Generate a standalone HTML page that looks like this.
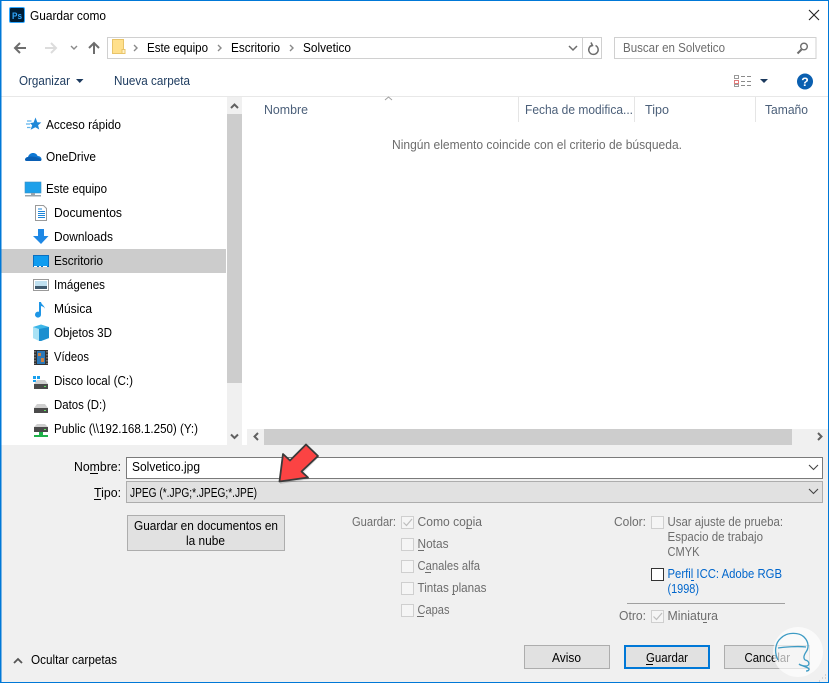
<!DOCTYPE html>
<html lang="es"><head><meta charset="utf-8"><title>Guardar como</title>
<style>
html,body{margin:0;padding:0;background:#fff;width:829px;height:683px;overflow:hidden}
svg{display:block}
text{font-family:"Liberation Sans",sans-serif;font-size:12.5px;fill:#000}
.g{fill:#6d6d6d}.h{fill:#4c607a}.n{fill:#1c3a5e}.b{fill:#0066cc}
.c{fill:#f5f5f5;stroke:#cfcfcf}
.k{fill:none;stroke:#bdbdbd;stroke-width:1.2}
.ch{fill:none;stroke:#606060;stroke-width:2}
</style></head><body>
<svg xmlns="http://www.w3.org/2000/svg" width="829" height="683" viewBox="0 0 829 683">
<rect width="829" height="683" fill="#fff"/>
<!-- bottom panel -->
<rect x="0" y="445" width="829" height="238" fill="#f0f0f0"/>

<!-- title -->
<rect x="9.5" y="7.5" width="15" height="15" rx="1.5" fill="#001e36" stroke="#31a8ff"/>
<text x="12" y="19" textLength="10" lengthAdjust="spacingAndGlyphs" style="font-size:9px;font-weight:bold;fill:#31a8ff">Ps</text>
<text x="30" y="20" textLength="76" lengthAdjust="spacingAndGlyphs">Guardar como</text>
<path d="M809 10l10 10M819 10l-10 10" stroke="#222" stroke-width="1.1" fill="none"/>

<!-- nav buttons -->
<path d="M15 48h11M20 43l-5 5 5 5" fill="none" stroke="#6d6d6d" stroke-width="2"/>
<path d="M56 48h-11M51 43l5 5-5 5" fill="none" stroke="#dcdcdc" stroke-width="2"/>
<path d="M71 46l3 3 3-3" fill="none" stroke="#8a8a8a" stroke-width="1.4"/>
<path d="M94 54V43M89 48l5-5 5 5" fill="none" stroke="#6d6d6d" stroke-width="2"/>

<!-- address bar -->
<rect x="107.500" y="37.500" width="494" height="21" fill="#fff" stroke="#d0d0d0"/>
<path d="M582.500 38v20" stroke="#d0d0d0"/>
<path d="M112.500 39.500h11v14h-11z" fill="#ffe08c" stroke="#e8c46a"/>
<path d="M122 49.500h3v4h-3z" fill="#fff2c8" stroke="#e8c46a"/>
<path d="M134 45l3 3-3 3M218 45l3 3-3 3M290 45l3 3-3 3" fill="none" stroke="#8a8a8a" stroke-width="1.4"/>
<text x="147" y="52" textLength="61" lengthAdjust="spacingAndGlyphs">Este equipo</text>
<text x="231" y="52" textLength="49" lengthAdjust="spacingAndGlyphs">Escritorio</text>
<text x="303" y="52" textLength="48" lengthAdjust="spacingAndGlyphs">Solvetico</text>
<path d="M569 46l4 4 4-4" fill="none" stroke="#6d6d6d" stroke-width="1.5"/>
<path d="M595.500 45.500a4.700 4.700 0 1 1-3.600-.2M591 42.500l1.500 3-3 1" fill="none" stroke="#6d6d6d" stroke-width="1.500"/>

<!-- search -->
<rect x="614.500" y="37.500" width="201.500" height="21" fill="#fff" stroke="#d0d0d0"/>
<text class="g" x="623" y="52" textLength="102" lengthAdjust="spacingAndGlyphs">Buscar en Solvetico</text>
<circle cx="804" cy="46.500" r="3.300" fill="none" stroke="#6d6d6d" stroke-width="1.400"/>
<path d="M801.500 49.500l-4 4" stroke="#6d6d6d" stroke-width="2"/>

<!-- toolbar -->
<text class="n" x="19" y="85" textLength="51" lengthAdjust="spacingAndGlyphs">Organizar</text>
<path d="M76 79h7.500l-3.750 4z" fill="#1c3a5e"/>
<text class="n" x="114" y="85" textLength="76" lengthAdjust="spacingAndGlyphs">Nueva carpeta</text>
<rect x="734.500" y="75.500" width="4" height="3" fill="#fff" stroke="#9a9a9a"/>
<rect x="734.500" y="80.500" width="4" height="3" fill="#fff" stroke="#e07a7a"/>
<rect x="734.500" y="84.500" width="4" height="2" fill="#fff" stroke="#9a9a9a"/>
<path d="M741 76.500h4M747 76.500h4M741 81.500h4M747 81.500h4M741 85.500h4M747 85.500h4" stroke="#8a8a8a"/>
<path d="M760 79h8l-4 4z" fill="#1c3a5e"/>
<circle cx="805" cy="81.500" r="8" fill="#0a5fb0"/>
<text x="801.300" y="86" textLength="7.500" lengthAdjust="spacingAndGlyphs" style="font-size:12px;font-weight:bold;fill:#fff">?</text>

<rect x="0" y="96" width="829" height="1" fill="#e8e8e8"/>

<!-- column headers -->
<path d="M385 100l3.500-3 3.500 3" fill="none" stroke="#a0a0a0"/>
<text class="h" x="264" y="114" textLength="44" lengthAdjust="spacingAndGlyphs">Nombre</text>
<text class="h" x="525" y="114" textLength="108" lengthAdjust="spacingAndGlyphs">Fecha de modifica...</text>
<text class="h" x="645" y="114" textLength="24" lengthAdjust="spacingAndGlyphs">Tipo</text>
<text class="h" x="765" y="114" textLength="43" lengthAdjust="spacingAndGlyphs">Tamaño</text>
<path d="M518.500 97v25M634.500 97v25M755.500 97v25" stroke="#e5e5e5"/>
<text class="g" x="392" y="149" textLength="290" lengthAdjust="spacingAndGlyphs">Ningún elemento coincide con el criterio de búsqueda.</text>

<!-- sidebar selection -->
<rect x="1" y="249" width="225" height="24" fill="#cccccc"/>

<!-- sidebar scrollbar -->
<rect x="227" y="97" width="15" height="348" fill="#f0f0f0"/>
<rect x="227" y="114" width="15" height="269" fill="#cdcdcd"/>
<path d="M231 108l3.500-3.500 3.500 3.500M231 434.500l3.500 3.500 3.500-3.500" class="ch"/>

<!-- horizontal scrollbar -->
<rect x="247" y="429" width="582" height="16" fill="#f0f0f0"/>
<rect x="264" y="429" width="528" height="16" fill="#cdcdcd"/>
<path d="M258 433l-3.500 3.500 3.500 3.500M818 433l3.500 3.500-3.500 3.500" class="ch"/>

<!-- sidebar text -->
<text x="46" y="129" textLength="75" lengthAdjust="spacingAndGlyphs">Acceso rápido</text>
<text x="46" y="161" textLength="50" lengthAdjust="spacingAndGlyphs">OneDrive</text>
<text x="46" y="193" textLength="61" lengthAdjust="spacingAndGlyphs">Este equipo</text>
<text x="54" y="217" textLength="68" lengthAdjust="spacingAndGlyphs">Documentos</text>
<text x="54" y="241" textLength="59" lengthAdjust="spacingAndGlyphs">Downloads</text>
<text x="54" y="265" textLength="49" lengthAdjust="spacingAndGlyphs">Escritorio</text>
<text x="54" y="289" textLength="51" lengthAdjust="spacingAndGlyphs">Imágenes</text>
<text x="54" y="313" textLength="38" lengthAdjust="spacingAndGlyphs">Música</text>
<text x="54" y="337" textLength="58" lengthAdjust="spacingAndGlyphs">Objetos 3D</text>
<text x="54" y="361" textLength="35" lengthAdjust="spacingAndGlyphs">Vídeos</text>
<text x="54" y="385" textLength="79" lengthAdjust="spacingAndGlyphs">Disco local (C:)</text>
<text x="54" y="409" textLength="52" lengthAdjust="spacingAndGlyphs">Datos (D:)</text>
<text x="54" y="433" textLength="144" lengthAdjust="spacingAndGlyphs">Public (\\192.168.1.250) (Y:)</text>

<!-- sidebar icons -->
<path d="M35.500 117.500l1.800 4.700 4 .3-3.200 2.800 1.100 4.200-3.800-2.200-4.800 2.400 1.600-4.400-2.200-2.200 3.600-.6z" fill="#1e88d8"/>
<path d="M27 121h4.500M26 124h4M27 127.500h3.500" stroke="#5fb4ec" stroke-width="1.200"/>
<path d="M25 160c0-2.500 2-3 3-3 .8-2.700 3-4 5-4 2.400 0 4 1.300 4.600 3 2.400 0 3.900 1.500 3.900 3.200 0 1.300-.8 1.800-1.500 1.800H27c-1.200 0-2-.8-2-1z" fill="#0f78d4"/>
<path d="M25 160c0-2 3-3.500 6-3.500s8 1 10.500 3c0 1-.8 1.500-1.500 1.500H27c-1.200 0-2-.8-2-1z" fill="#0a5fb4"/>
<rect x="25" y="182" width="16" height="11" fill="#1ea0ea" stroke="#3a8fc4" stroke-width=".6"/>
<rect x="31" y="193" width="4" height="2" fill="#9aa5ad"/>
<rect x="25" y="195" width="16" height="1.500" fill="#9aa5ad"/>
<path d="M35.500 205.500h8l3 3v12h-11z" fill="#fff" stroke="#9a9a9a"/>
<path d="M38 209h4M38 211.500h7M38 213.500h7M38 215.500h7M38 217.500h7" stroke="#1f86d8" stroke-width="1.100"/>
<path d="M38 229h6v7h4.500l-7.500 8-8-8H38z" fill="#1e88e5"/>
<rect x="33.500" y="255.500" width="15" height="11" fill="#0f9cf0" stroke="#0a6fc0"/>
<path d="M34 266.500h3M39 266.500h2M43 266.500h4" stroke="#fff"/>
<rect x="33.500" y="279.500" width="15" height="11" fill="#fff" stroke="#9a9a9a"/>
<rect x="35" y="281" width="12" height="8" fill="#bfe0f0"/>
<path d="M35 286h12v3H35z" fill="#3f5a6e"/>
<path d="M41 302v12.500a3 3 0 1 1-2-2.700V302h2c.5 3 4 3.500 4 7.500 0-2-2-3-4-3.500z" fill="#1e96e6"/>
<path d="M33 327l8-2.500 8 2.500v11l-8 3-8-3z" fill="#3db6e8"/>
<path d="M33 327l6 2v12l-6-3z" fill="#a9e2f5"/>
<path d="M39 329l10-2v11l-8 3h-2z" fill="#1c8fd0"/>
<rect x="34" y="350" width="14" height="15" fill="#333"/>
<rect x="37" y="351" width="8" height="13" fill="#2a78b8"/>
<path d="M35 351v13M47 351v13" stroke="#aaa" stroke-dasharray="1.500 1.500"/>
<path d="M38 353h3v3h-3zM41 358h3v4h-3z" fill="#d08040"/>
<path d="M33 376h3v3h-3zM37 376h3v3h-3zM33 380h3v2h-3zM37 380h3v2h-3z" fill="#18a0ee"/>
<path d="M37 380h8l3 4H34z" fill="#cfcfcf"/>
<rect x="34" y="384" width="14" height="5" fill="#4a4a4a"/>
<rect x="44" y="386" width="2" height="1" fill="#5fe05f"/>
<path d="M37 404h8l3 4H34z" fill="#cfcfcf"/>
<rect x="34" y="408" width="14" height="5" fill="#4a4a4a"/>
<rect x="44" y="410" width="2" height="1" fill="#5fe05f"/>
<path d="M37 424h8l3 3H34z" fill="#cfcfcf"/>
<rect x="34" y="427" width="14" height="5" fill="#4a4a4a"/>
<rect x="44" y="429" width="2" height="1" fill="#5fe05f"/>
<path d="M39 432h4v3h5v2H34v-2h5z" fill="#1fb14a"/>

<!-- name/type -->
<text x="74" y="471" textLength="47" lengthAdjust="spacingAndGlyphs">Nombre:</text>
<path d="M90 473.500h8" stroke="#000"/>
<rect x="126.500" y="457.500" width="696" height="21" fill="#fff" stroke="#7a7a7a"/>
<text x="132" y="471" textLength="68" lengthAdjust="spacingAndGlyphs">Solvetico.jpg</text>
<path d="M809 465l4.500 4.500 4.500-4.500" fill="none" stroke="#444" stroke-width="1.100"/>
<text x="94" y="497" textLength="27" lengthAdjust="spacingAndGlyphs">Tipo:</text>
<path d="M94 499.500h7" stroke="#000"/>
<rect x="126.500" y="481.500" width="696" height="21" fill="#e1e1e1" stroke="#adadad"/>
<text x="130" y="497" textLength="127" lengthAdjust="spacingAndGlyphs">JPEG (*.JPG;*.JPEG;*.JPE)</text>
<path d="M809 489l4.500 4.500 4.500-4.500" fill="none" stroke="#444" stroke-width="1.100"/>

<!-- cloud button -->
<rect x="127.500" y="515.500" width="157" height="35" fill="#e1e1e1" stroke="#adadad"/>
<text x="134" y="530" textLength="144" lengthAdjust="spacingAndGlyphs">Guardar en documentos en</text>
<text x="186" y="545" textLength="39" lengthAdjust="spacingAndGlyphs">la nube</text>

<!-- save options -->
<text class="g" x="352" y="526" textLength="44" lengthAdjust="spacingAndGlyphs">Guardar:</text>
<rect class="c" x="401.500" y="516.500" width="12" height="12"/>
<path class="k" d="M403.500 522.500l3 3 5.500-6.500"/>
<text class="g" x="417.500" y="526" textLength="64.500" lengthAdjust="spacingAndGlyphs">Como copia</text>
<rect class="c" x="401.500" y="538.500" width="12" height="12"/>
<text class="g" x="417.500" y="548" textLength="31" lengthAdjust="spacingAndGlyphs">Notas</text>
<rect class="c" x="401.500" y="560.500" width="12" height="12"/>
<text class="g" x="417.500" y="570" textLength="62.500" lengthAdjust="spacingAndGlyphs">Canales alfa</text>
<rect class="c" x="401.500" y="582.500" width="12" height="12"/>
<text class="g" x="417.500" y="592" textLength="69" lengthAdjust="spacingAndGlyphs">Tintas planas</text>
<rect class="c" x="401.500" y="604.500" width="12" height="12"/>
<text class="g" x="417.500" y="614" textLength="32" lengthAdjust="spacingAndGlyphs">Capas</text>
<path d="M418 550.500h6M425 572.500h6M452 594.500h3M417 616.500h7M466 528.500h6" stroke="#6d6d6d"/>

<!-- color options -->
<text class="g" x="614" y="526" textLength="32" lengthAdjust="spacingAndGlyphs">Color:</text>
<rect class="c" x="651.500" y="516.500" width="12" height="12"/>
<text class="g" x="667.500" y="526" textLength="115.500" lengthAdjust="spacingAndGlyphs">Usar ajuste de prueba:</text>
<text class="g" x="667.500" y="541" textLength="95.500" lengthAdjust="spacingAndGlyphs">Espacio de trabajo</text>
<text class="g" x="667.500" y="556" textLength="32" lengthAdjust="spacingAndGlyphs">CMYK</text>
<rect x="651.500" y="568.500" width="12" height="12" fill="#fff" stroke="#333"/>
<text class="b" x="667.500" y="578" textLength="114.500" lengthAdjust="spacingAndGlyphs">Perfil ICC: Adobe RGB</text>
<text class="b" x="667.500" y="593" textLength="31.500" lengthAdjust="spacingAndGlyphs">(1998)</text>
<path d="M691 580.500h3" stroke="#0066cc"/>
<rect x="627" y="603" width="158" height="1" fill="#a0a0a0"/>
<text class="g" x="619" y="620" textLength="27" lengthAdjust="spacingAndGlyphs">Otro:</text>
<rect class="c" x="651.500" y="610.500" width="12" height="12"/>
<path class="k" d="M653.500 616.500l3 3 5.500-6.500"/>
<text class="g" x="667.500" y="620" textLength="50.500" lengthAdjust="spacingAndGlyphs">Miniatura</text>
<path d="M703 622.500h4" stroke="#6d6d6d"/>

<!-- bottom -->
<path d="M14 663l4-4 4 4" fill="none" stroke="#555" stroke-width="1.800"/>
<text x="31" y="664" textLength="86" lengthAdjust="spacingAndGlyphs">Ocultar carpetas</text>
<rect x="524.500" y="645.500" width="85" height="23" fill="#e1e1e1" stroke="#adadad"/>
<text x="552" y="662" textLength="29" lengthAdjust="spacingAndGlyphs">Aviso</text>
<rect x="625" y="646" width="84" height="22" fill="#e1e1e1" stroke="#0078d7" stroke-width="2"/>
<text x="646" y="662" textLength="42" lengthAdjust="spacingAndGlyphs">Guardar</text>
<path d="M646 664.500h7" stroke="#000"/>
<rect x="724.500" y="645.500" width="85" height="23" fill="#e1e1e1" stroke="#adadad"/>
<text x="744.500" y="662" textLength="45.500" lengthAdjust="spacingAndGlyphs">Cancelar</text>

<!-- watermark -->
<circle cx="798" cy="652" r="25" fill="#fff" fill-opacity=".65"/>
<path d="M778 660c-4-8-3-17 3-22 6-6 18-6 23-1 5 5 5 11 2 15-2 3-3 6-1 8M805 660c5 1 5 6 1 6-3 0-6-1-7-2 3 2 7 3 9 4 2 1 1 3-2 3M778 648c6-1 20-2 28-1" fill="none" stroke="#3d9bc4" stroke-width="1.300"/>
<path d="M825 675h1M822 678h1M825 678h1M819 681h1" stroke="#b5b5b5"/>

<!-- red arrow -->
<path d="M280 484l5-28 6 5 15-15 13 11-15 15 6 7z" fill="#000" fill-opacity=".14"/>
<path d="M279.500 481.500l3.500-27.500 7 6.500 16-16 12 11.500-16.500 15.500 6.500 6z" fill="#fb4343" stroke="#3a3a3a" stroke-width="1.800" stroke-linejoin="round"/>

<!-- window border -->
<rect x="0" y="0" width="829" height="1" fill="#0078d7"/>
<rect x="0" y="0" width="1.500" height="683" fill="#0078d7"/>
<rect x="828" y="0" width="1" height="683" fill="#0078d7"/>
<rect x="0" y="682" width="829" height="1" fill="#0078d7"/>
</svg>
</body></html>
